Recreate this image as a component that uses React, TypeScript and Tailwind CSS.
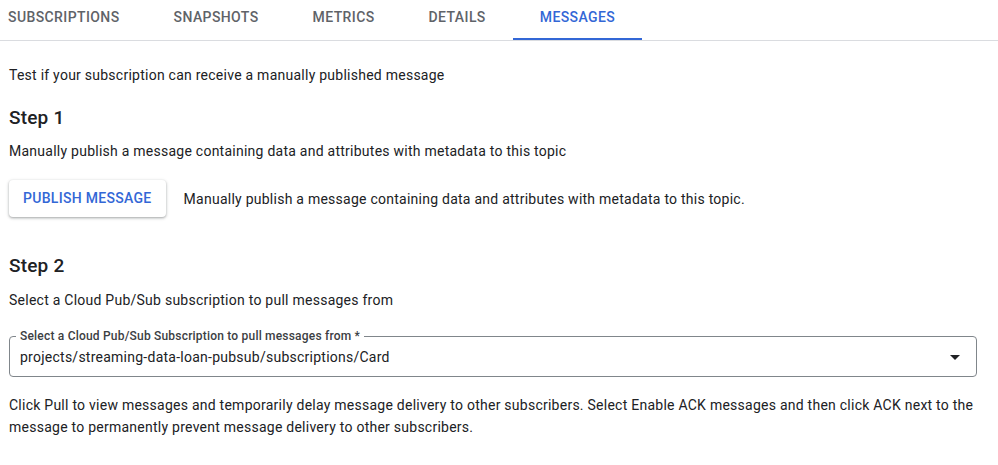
import React from "react";

const tabs = ["SUBSCRIPTIONS", "SNAPSHOTS", "METRICS", "DETAILS", "MESSAGES"];

export default function App() {
  return (
    <div
      className="w-[998px] h-[465px] bg-white text-[#202124] overflow-hidden tracking-[0.25px]"
      style={{ fontFamily: "Roboto, 'Liberation Sans', sans-serif" }}
    >
      <div className="h-[41px] border-b border-[#dadce0] flex items-stretch -ml-[19px]">
        {tabs.map((t) => {
          const active = t === "MESSAGES";
          return (
            <div
              key={t}
              className={`h-[40px] px-[27px] flex items-center text-[14px] font-medium tracking-[0.4px] border-b-2 ${
                active ? "text-[#3367d6] border-[#3367d6]" : "text-[#5f6368] border-transparent"
              }`}
            >
              <span className="-mt-[4px]">{t}</span>
            </div>
          );
        })}
      </div>

      <div className="pl-[9px] pr-[4px]">
        <p className="mt-[24px] text-[14px] leading-[20px]">
          Test if your subscription can receive a manually published message
        </p>
        <h2 className="mt-[21px] text-[19px] leading-[24px] font-medium tracking-[0.2px]">Step 1</h2>
        <p className="mt-[11px] text-[14px] leading-[20px]">
          Manually publish a message containing data and attributes with metadata to this topic
        </p>
        <div className="mt-[19px] flex items-center gap-[18px]">
          <button className="h-[37px] px-[14px] rounded-[4px] bg-white text-[#3367d6] text-[14px] font-medium tracking-[0.3px] shadow-[0_1px_2px_0_rgba(60,64,67,0.3),0_1px_3px_1px_rgba(60,64,67,0.15)]">
            PUBLISH MESSAGE
          </button>
          <span className="text-[14px] leading-[20px]">
            Manually publish a message containing data and attributes with metadata to this topic.
          </span>
        </div>

        <h2 className="mt-[37px] text-[19px] leading-[24px] font-medium tracking-[0.2px]">Step 2</h2>
        <p className="mt-[12px] text-[14px] leading-[20px]">
          Select a Cloud Pub/Sub subscription to pull messages from
        </p>

        <div className="relative mt-[26px] w-[968px] h-[41px] border border-[#80868b] rounded-[4px] flex items-center pl-[10px] pr-[16px]">
          <span className="absolute -top-[9px] left-[6px] px-[4px] bg-white text-[12px] leading-[16px] font-medium tracking-[0.2px] text-[#3c4043]">
            Select a Cloud Pub/Sub Subscription to pull messages from *
          </span>
          <span className="flex-1 text-[14px] leading-[20px] mt-[1px]">
            projects/streaming-data-loan-pubsub/subscriptions/Card
          </span>
          <svg width="10" height="5" viewBox="0 0 10 5" className="mt-[1px]">
            <path d="M0 0 L10 0 L5 5 Z" fill="#202124" />
          </svg>
        </div>

        <p className="mt-[17px] text-[14px] leading-[22px]">
          Click Pull to view messages and temporarily delay message delivery to other subscribers. Select Enable ACK messages and then click ACK next to the message to permanently prevent message delivery to other subscribers.
        </p>
      </div>
    </div>
  );
}
